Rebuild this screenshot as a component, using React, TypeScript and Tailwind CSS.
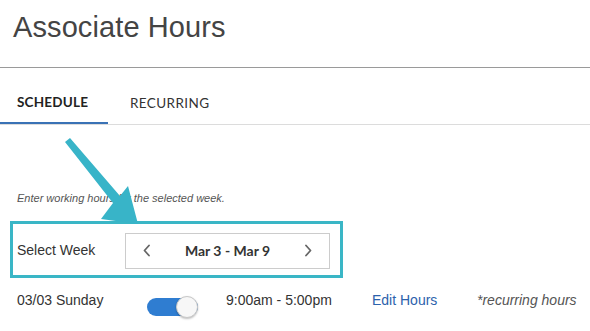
import React from "react";

export default function App() {
  return (
    <div className="relative w-[590px] h-[331px] overflow-hidden bg-white font-['Liberation_Sans',Arial,sans-serif] text-[#333]">
      <div className="h-[68px] border-b border-[#9a9a9a] pl-[13px] pt-[11px]">
        <h1 className="text-[29px] leading-[33px] text-[#444] tracking-[0.1px]">Associate Hours</h1>
      </div>

      <div className="flex h-[57px] border-b border-[#dcdcdc] font-['Lato',sans-serif] text-[13.5px]">
        <div className="flex h-full w-[108px] items-center border-b-2 border-[#3a72b5] pl-[17px] pt-[14px] font-bold text-[#222] tracking-[0.2px]">
          SCHEDULE
        </div>
        <div className="flex h-full items-center pl-[22px] pt-[14px] text-[#333] tracking-[0.4px]">
          RECURRING
        </div>
      </div>

      <p className="mt-[66px] pl-[17px] text-[11px] leading-[14px] italic text-[#555]">
        Enter working hours for the selected week.
      </p>

      <div className="ml-[10px] mt-[16px] flex h-[57px] w-[333px] items-center border-[3px] border-[#3ab6c6] pt-[2px]">
        <div className="w-[112px] pl-[4px] text-[14px]">Select Week</div>
        <div className="flex h-[36px] w-[205px] items-center justify-between border border-[#cccccc] px-[16px]">
          <svg width="9" height="13" viewBox="0 0 9 13" fill="none">
            <polyline points="7,1.5 2.5,6.5 7,11.5" stroke="#666" strokeWidth="1.8" strokeLinecap="round" strokeLinejoin="round" />
          </svg>
          <span className="font-['Lato',sans-serif] text-[14px] font-bold text-[#333]">Mar 3 - Mar 9</span>
          <svg width="9" height="13" viewBox="0 0 9 13" fill="none">
            <polyline points="2,1.5 6.5,6.5 2,11.5" stroke="#666" strokeWidth="1.8" strokeLinecap="round" strokeLinejoin="round" />
          </svg>
        </div>
      </div>

      <div className="mt-[14px] flex items-start pl-[17px] text-[14px] leading-[16px]">
        <div className="w-[130px]">03/03 Sunday</div>
        <div className="relative mt-[4px] h-[22px] w-[51px]">
          <div className="absolute inset-x-0 top-[2px] h-[18px] rounded-full bg-[#2f7dd1]" />
          <div className="absolute right-0 top-0 h-[22px] w-[22px] rounded-full border border-[#c8c8c8] bg-[#f7f7f7] shadow-[0_1px_2px_rgba(0,0,0,0.25)]" />
        </div>
        <div className="ml-[28px] w-[146px]">9:00am - 5:00pm</div>
        <div className="w-[105px] text-[#2c62ac]">Edit Hours</div>
        <div className="italic text-[#555]">*recurring hours</div>
      </div>

      <svg className="pointer-events-none absolute left-0 top-0" width="590" height="331" viewBox="0 0 590 331">
        <polygon
          points="65,142 113,203 101,219 138,224 128,186 120,196 70,138"
          fill="#38b4c8"
          strokeLinejoin="round"
        />
      </svg>
    </div>
  );
}
